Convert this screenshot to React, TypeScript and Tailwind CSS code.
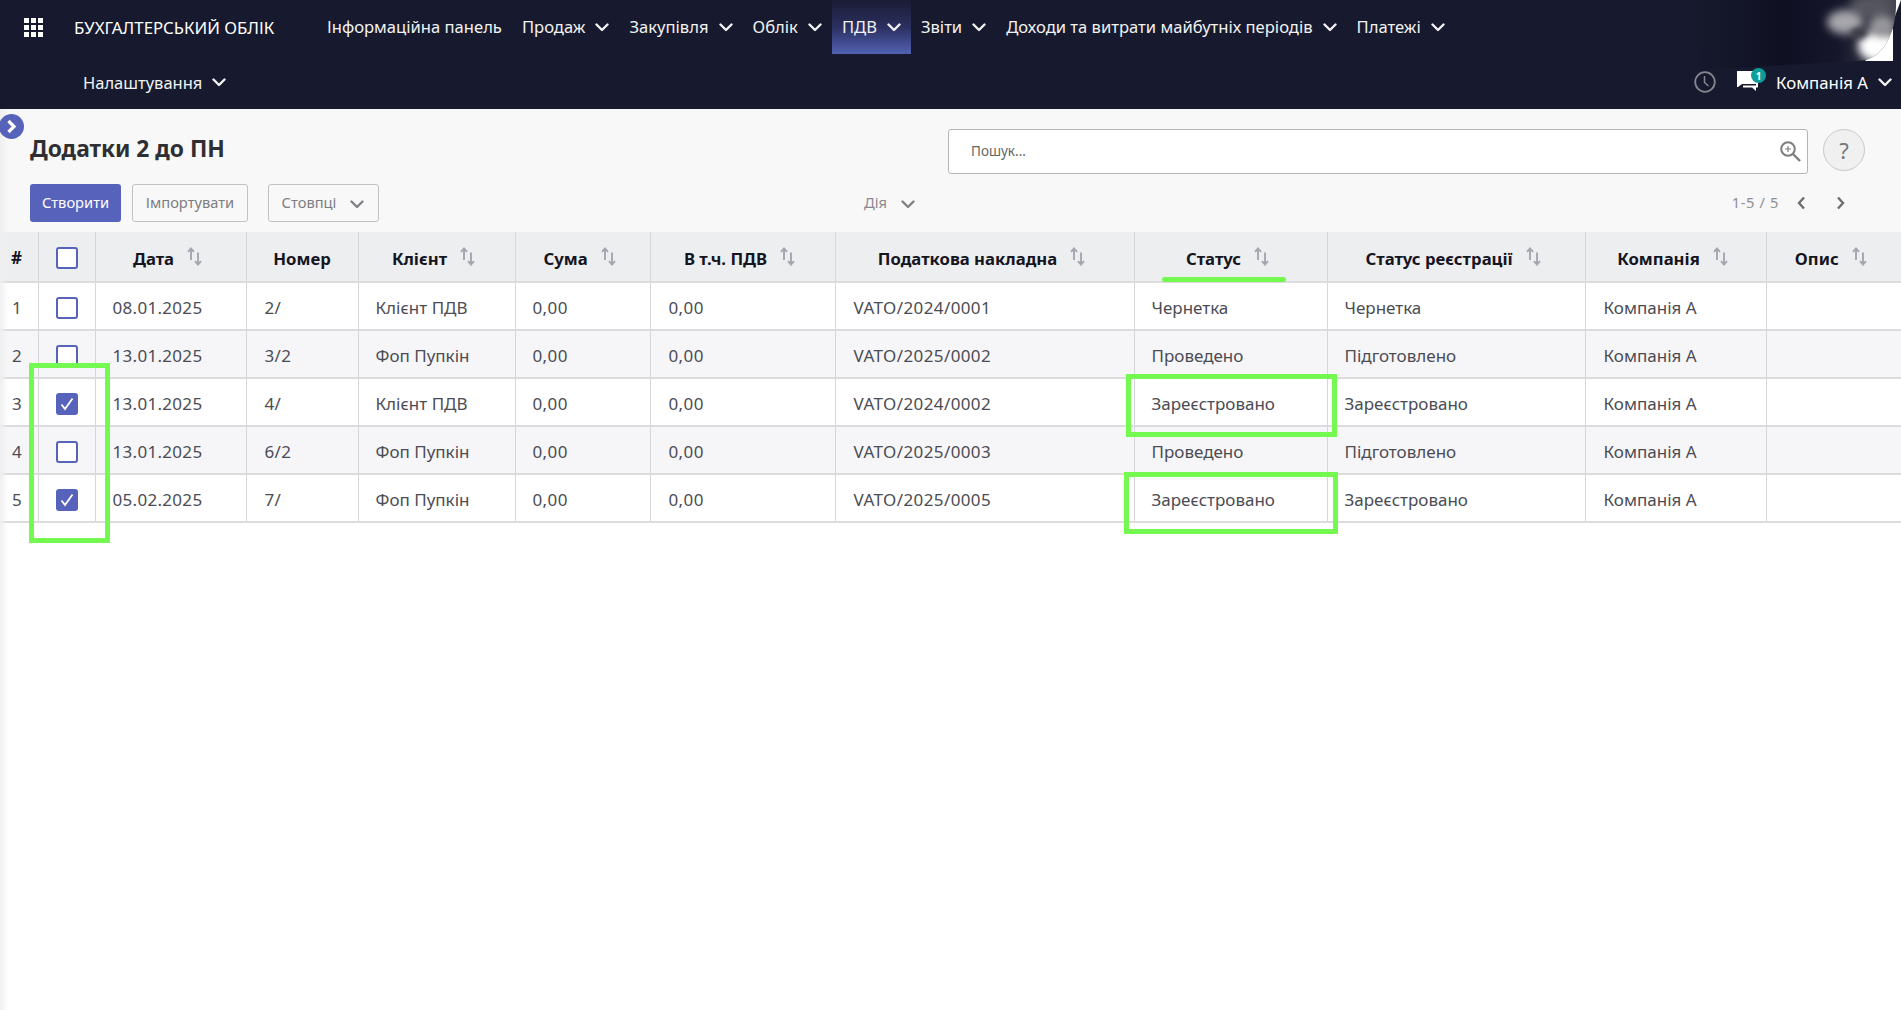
import React from "react";

const Chevron = ({ className = "text-[#f2f2f2]" }: { className?: string }) => (
  <svg width="14" height="9" viewBox="0 0 14 9" fill="none" className={className}>
    <path d="M1.5 1.5 7 7l5.5-5.5" stroke="currentColor" strokeWidth="2.4" strokeLinecap="round" strokeLinejoin="round" />
  </svg>
);

const Sort = () => (
  <svg width="15" height="19" viewBox="0 0 15 19" fill="none" className="text-[#a3a6ad] shrink-0">
    <path d="M4 13V1.5M1 4.8 4 1.5l3 3.3M11 5.5V17.5M8 14.2l3 3.3 3-3.3" stroke="currentColor" strokeWidth="1.9" />
  </svg>
);

const Check = ({ on }: { on: boolean }) => (
  <span
    className={
      "inline-flex w-[22px] h-[22px] items-center justify-center rounded-[3px] border-2 border-[#5763bb] align-middle " +
      (on ? "bg-[#5763bb]" : "bg-white")
    }
  >
    {on && (
      <svg width="16" height="16" viewBox="0 0 16 16" fill="none">
        <path d="M2.5 8.5 6 13 13.5 2.5" stroke="#fff" strokeWidth="1.8" />
      </svg>
    )}
  </span>
);

const NavItem = ({ label, active, chevron = true }: { label: string; active?: boolean; chevron?: boolean }) => (
  <div
    className={
      "flex items-center gap-[10px] px-[10px] h-[54px] " +
      (active ? "bg-gradient-to-b from-[#1a1c33] via-[#2b3060] to-[#5361b4]" : "")
    }
  >
    <span className="whitespace-nowrap">{label}</span>
    {chevron && <Chevron />}
  </div>
);

const cols = [38, 57, 151, 112, 157, 135, 185, 299, 193, 258, 181, 135];

const headers: { t: string; sort: boolean }[] = [
  { t: "Дата", sort: true },
  { t: "Номер", sort: false },
  { t: "Клієнт", sort: true },
  { t: "Сума", sort: true },
  { t: "В т.ч. ПДВ", sort: true },
  { t: "Податкова накладна", sort: true },
  { t: "Статус", sort: true },
  { t: "Статус реєстрації", sort: true },
  { t: "Компанія", sort: true },
  { t: "Опис", sort: true },
];

const rows = [
  { d: "08.01.2025", n: "2/", c: "Клієнт ПДВ", v: "VATO/2024/0001", s: "Чернетка", r: "Чернетка", on: false },
  { d: "13.01.2025", n: "3/2", c: "Фоп Пупкін", v: "VATO/2025/0002", s: "Проведено", r: "Підготовлено", on: false },
  { d: "13.01.2025", n: "4/", c: "Клієнт ПДВ", v: "VATO/2024/0002", s: "Зареєстровано", r: "Зареєстровано", on: true },
  { d: "13.01.2025", n: "6/2", c: "Фоп Пупкін", v: "VATO/2025/0003", s: "Проведено", r: "Підготовлено", on: false },
  { d: "05.02.2025", n: "7/", c: "Фоп Пупкін", v: "VATO/2025/0005", s: "Зареєстровано", r: "Зареєстровано", on: true },
];

const Smudge = () => (
  <svg width="241" height="72" viewBox="0 0 241 72" className="absolute right-0 top-0">
    <defs>
      <filter id="b1" x="-50%" y="-50%" width="200%" height="200%">
        <feGaussianBlur stdDeviation="4" />
      </filter>
      <filter id="b2" x="-50%" y="-50%" width="200%" height="200%">
        <feGaussianBlur stdDeviation="3" />
      </filter>
      <linearGradient id="dk" x1="0" x2="1" y1="0" y2="0">
        <stop offset="0" stopColor="#171a2e" />
        <stop offset="0.45" stopColor="#0f1022" />
        <stop offset="0.7" stopColor="#15162a" />
        <stop offset="1" stopColor="#444450" />
      </linearGradient>
      <clipPath id="cl">
        <path d="M236 0C237 28 226 60 198 61L40 70 30 0Z" />
      </clipPath>
    </defs>
    <path d="M236 0H241L233.500 20Z" fill="#fff" />
    <path d="M205 61H233V28Z" fill="#fff" />
    <g clipPath="url(#cl)">
      <rect x="30" y="0" width="210" height="72" fill="url(#dk)" />
      <ellipse cx="212" cy="6" rx="22" ry="12" fill="#55555e" filter="url(#b1)" />
      <ellipse cx="185" cy="22" rx="18" ry="12" fill="#a6a6ac" filter="url(#b1)" />
      <ellipse cx="218" cy="46" rx="20" ry="16" fill="#ffffff" filter="url(#b1)" />
      <ellipse cx="222" cy="26" rx="13" ry="11" fill="#96969b" filter="url(#b1)" />
      <ellipse cx="199" cy="33" rx="9" ry="5" fill="#3a3a44" filter="url(#b2)" />
    </g>
  </svg>
);

export default function App() {
  return (
    <div className="relative min-h-screen w-full overflow-hidden bg-white font-['Noto_Sans',sans-serif] text-[17px]">
      <header className="bg-[#171a2e] text-[#f2f2f2] h-[109px] relative">
        <Smudge />
        <div className="relative flex h-[54px] items-center text-[16.600px] leading-[26px]">
          <svg width="19" height="19" viewBox="0 0 19 19" fill="#fff" className="ml-[24px] shrink-0">
            {[0, 7, 14].flatMap((y) =>
              [0, 7, 14].map((x) => <rect key={x + "-" + y} x={x} y={y} width="5" height="5" />)
            )}
          </svg>
          <span className="ml-[31px] mt-[2px] w-[243px] whitespace-nowrap text-[16.800px] text-white">БУХГАЛТЕРСЬКИЙ ОБЛІК</span>
          <NavItem label="Інформаційна панель" chevron={false} />
          <NavItem label="Продаж" />
          <NavItem label="Закупівля" />
          <NavItem label="Облік" />
          <NavItem label="ПДВ" active />
          <NavItem label="Звіти" />
          <NavItem label="Доходи та витрати майбутніх періодів" />
          <NavItem label="Платежі" />
        </div>
        <div className="relative flex h-[55px] items-center text-[16.800px] leading-[26px] pl-[73px] pr-[9px] pt-[2px]">
          <div className="flex items-center gap-[10px] px-[10px] text-[16.500px]">
            <span>Налаштування</span>
            <Chevron />
          </div>
          <div className="ml-auto flex items-center">
            <svg width="22" height="22" viewBox="0 0 22 22" fill="none" className="text-[#85868e] -mt-[1px]">
              <circle cx="11" cy="11" r="9.800" stroke="currentColor" strokeWidth="1.800" />
              <path d="M10.500 5v6.500l4 3.500" stroke="currentColor" strokeWidth="1.500" />
            </svg>
            <div className="relative ml-[21px] mr-[17px] h-[22px] w-[22px] -mt-[3px]">
              <svg width="22" height="22" viewBox="0 0 22 22" fill="#fff">
                <path d="M0 1h19v13H5l-4 3H0Z" />
                <path d="M6 15.500h13V3h2v14.500h-2V21l-4-3.500H6Z" />
              </svg>
              <span className="absolute -top-[2px] left-[14px] flex h-[15px] w-[15px] items-center justify-center rounded-full bg-[#0c9f99] text-[10px] font-bold leading-none text-white">
                1
              </span>
            </div>
            <span className="whitespace-nowrap text-white">Компанія А</span>
            <span className="ml-[10px]">
              <Chevron />
            </span>
          </div>
        </div>
      </header>

      <div className="bg-[#f8f8f8] h-[123px] pt-[20px]">
        <div className="flex items-start h-[45px]">
          <h1 className="ml-[30px] mt-[4px] text-[22.800px] leading-[32px] font-bold text-[#2f2f33] whitespace-nowrap">
            Додатки 2 до ПН
          </h1>
          <div className="ml-auto flex h-[45px] w-[860px] items-center rounded-[3px] border border-[#b5b5b5] bg-white pl-[22px] pr-[6px] text-[13.500px] text-[#666]">
            <span>Пошук...</span>
            <svg width="21" height="21" viewBox="0 0 21 21" fill="none" className="ml-auto text-[#7d7d7d]">
              <circle cx="8" cy="8" r="6.800" stroke="currentColor" strokeWidth="2" />
              <path d="M13 13l7 7" stroke="currentColor" strokeWidth="2.400" />
              <path d="M8 5v6M5 8h6" stroke="currentColor" strokeWidth="1.200" />
            </svg>
          </div>
          <div className="ml-[15px] mr-[36px] flex h-[42px] w-[42px] items-center justify-center rounded-full border border-[#c9c9d0] bg-[#f0f0f0] text-[22px] text-[#777]">
            ?
          </div>
        </div>
        <div className="mt-[10px] flex h-[38px] items-center pl-[30px] text-[14.700px] leading-[22px]">
          <button className="h-[38px] w-[91px] rounded-[3px] bg-[#5763bb] pb-[2px] text-white">Створити</button>
          <button className="ml-[11px] h-[38px] w-[116px] rounded-[3px] border border-[#c2c2c6] pb-[2px] text-[#7d7d80]">
            Імпортувати
          </button>
          <button className="ml-[20px] flex h-[38px] w-[111px] items-center justify-center gap-[14px] rounded-[3px] border border-[#c2c2c6] pr-[1px] text-[#7d7d80]">
            <span className="mb-[2px]">Стовпці</span>
            <Chevron className="text-[#828286] mt-[3px]" />
          </button>
          <div className="ml-[485px] flex items-center gap-[14px] text-[#8a8a8e]">
            <span className="mb-[2px]">Дія</span>
            <Chevron className="text-[#828286] mt-[3px]" />
          </div>
          <div className="ml-auto mr-[56px] flex items-center text-[#8f8f93]">
            <span className="mb-[2px] whitespace-nowrap tracking-[0.6px]">1-5 / 5</span>
            <svg width="9" height="14" viewBox="0 0 9 14" fill="none" className="ml-[18px] -mt-[1px] text-[#6f6f73]">
              <path d="M7 1.500 2 7l5 5.500" stroke="currentColor" strokeWidth="2.400" />
            </svg>
            <svg width="9" height="14" viewBox="0 0 9 14" fill="none" className="ml-[30px] -mt-[1px] text-[#6f6f73]">
              <path d="M2 1.500 7 7l-5 5.500" stroke="currentColor" strokeWidth="2.400" />
            </svg>
          </div>
        </div>
      </div>

      <table className="w-full table-fixed border-collapse">
        <colgroup>
          {cols.map((w, i) => (
            <col key={i} style={{ width: w }} />
          ))}
        </colgroup>
        <thead>
          <tr className="h-[50px] bg-[#edeef0] text-[#15151f] border-b-2 border-[#dcdcde]">
            <th className="border-r border-[#d6d6d8] pl-[11px] pt-[2px] text-left font-bold">#</th>
            <th className="border-r border-[#d6d6d8] text-center">
              <Check on={false} />
            </th>
            {headers.map((h, i) => (
              <th key={i} className="border-r last:border-r-0 border-[#d6d6d8] p-0 font-bold">
                <div
                  className={
                    "flex items-center justify-center gap-[13px] whitespace-nowrap text-[16.700px] " +
                    (h.sort ? "pl-[2px] pr-[8px]" : "")
                  }
                >
                  <span className="pt-[5px]">{h.t}</span>
                  {h.sort && <Sort />}
                </div>
              </th>
            ))}
          </tr>
        </thead>
        <tbody className="text-[#4c4c54]">
          {rows.map((r, i) => (
            <tr key={i} className={"h-[48px] border-b-2 border-[#dcdcde] " + (i % 2 ? "bg-[#f6f6f9]" : "bg-white")}>
              <td className="border-r border-[#d6d6d8] pl-[12px] pt-[4px]">{i + 1}</td>
              <td className="border-r border-[#d6d6d8] text-center">
                <Check on={r.on} />
              </td>
              <td className="border-r border-[#d6d6d8] px-[17px] pt-[4px] whitespace-nowrap tracking-[0.3px]">{r.d}</td>
              <td className="border-r border-[#d6d6d8] pl-[18px] pt-[4px] whitespace-nowrap tracking-[0.4px]">{r.n}</td>
              <td className="border-r border-[#d6d6d8] px-[17px] pt-[4px] whitespace-nowrap">{r.c}</td>
              <td className="border-r border-[#d6d6d8] px-[17px] pt-[4px] whitespace-nowrap tracking-[0.4px]">0,00</td>
              <td className="border-r border-[#d6d6d8] pl-[18px] pt-[4px] whitespace-nowrap tracking-[0.4px]">0,00</td>
              <td className="border-r border-[#d6d6d8] pl-[18px] pt-[4px] whitespace-nowrap tracking-[0.4px]">{r.v}</td>
              <td className="border-r border-[#d6d6d8] px-[17px] pt-[4px] whitespace-nowrap">{r.s}</td>
              <td className="border-r border-[#d6d6d8] px-[17px] pt-[4px] whitespace-nowrap">{r.r}</td>
              <td className="border-r border-[#d6d6d8] pl-[18px] pt-[4px] whitespace-nowrap">Компанія А</td>
              <td className="px-[17px]" />
            </tr>
          ))}
        </tbody>
      </table>

      <div className="absolute left-0 top-[109px] bottom-0 w-[8px] bg-gradient-to-r from-[#efeff0] to-transparent" />

      <div className="absolute -left-[1px] top-[114px] flex h-[25px] w-[25px] items-center justify-center rounded-full bg-[#5763bb]">
        <svg width="11" height="15" viewBox="0 0 11 15" fill="none">
          <path d="M2.500 2 8 7.500 2.500 13" stroke="#fff" strokeWidth="3.200" />
        </svg>
      </div>

      <div className="absolute left-[1162px] top-[277px] h-[5px] w-[124px] rounded-full bg-[#73f94f]" />
      <div className="absolute left-[29px] top-[363px] h-[180px] w-[81px] border-[5px] border-[#73f94f]" />
      <div className="absolute left-[1126px] top-[374px] h-[63px] w-[211px] border-[5px] border-[#73f94f]" />
      <div className="absolute left-[1124px] top-[472px] h-[62px] w-[214px] border-[5px] border-[#73f94f]" />
    </div>
  );
}
